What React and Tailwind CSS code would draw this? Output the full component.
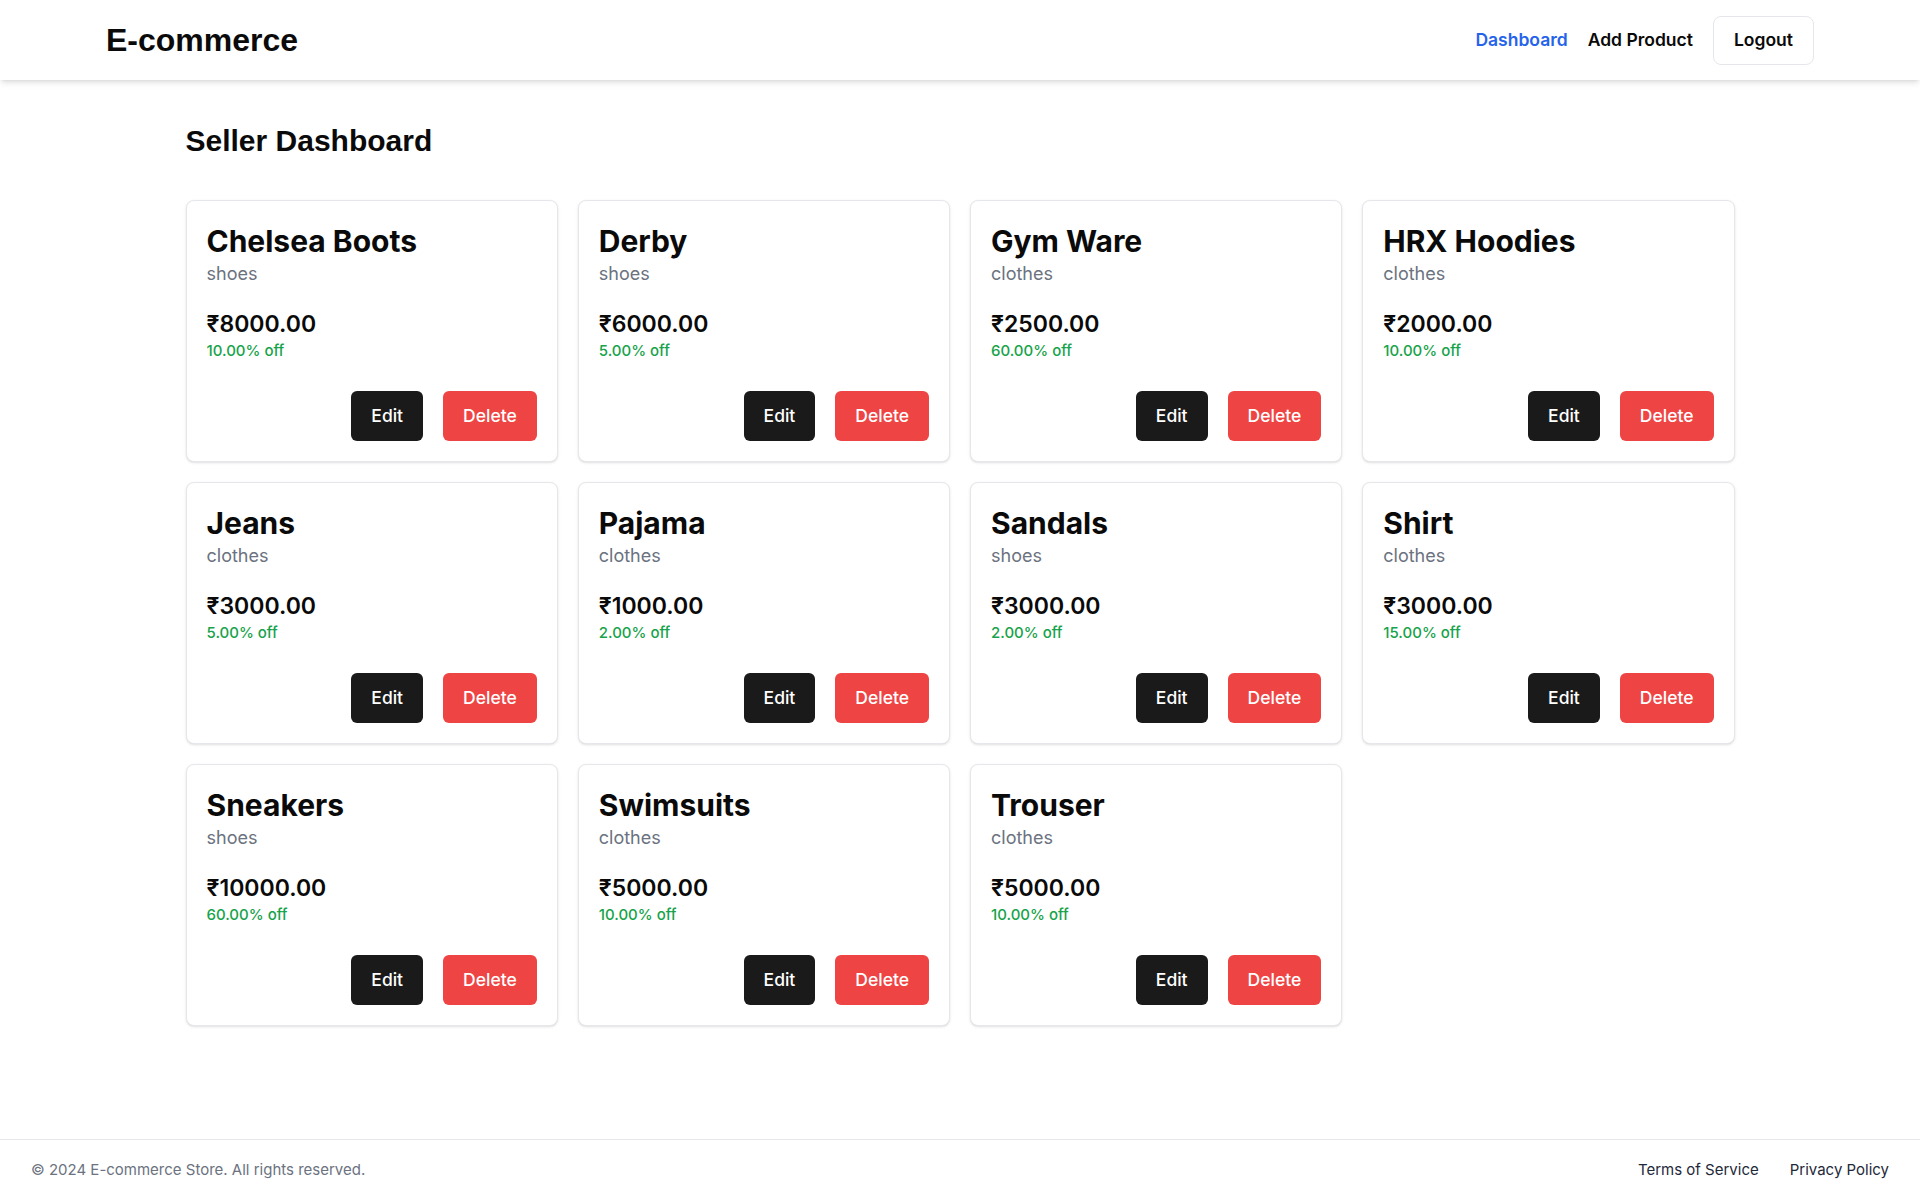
import React from 'react'

const products = [
  { name: 'Chelsea Boots', category: 'shoes', price: '8000.00', discount: '10.00' },
  { name: 'Derby', category: 'shoes', price: '6000.00', discount: '5.00' },
  { name: 'Gym Ware', category: 'clothes', price: '2500.00', discount: '60.00' },
  { name: 'HRX Hoodies', category: 'clothes', price: '2000.00', discount: '10.00' },
  { name: 'Jeans', category: 'clothes', price: '3000.00', discount: '5.00' },
  { name: 'Pajama', category: 'clothes', price: '1000.00', discount: '2.00' },
  { name: 'Sandals', category: 'shoes', price: '3000.00', discount: '2.00' },
  { name: 'Shirt', category: 'clothes', price: '3000.00', discount: '15.00' },
  { name: 'Sneakers', category: 'shoes', price: '10000.00', discount: '60.00' },
  { name: 'Swimsuits', category: 'clothes', price: '5000.00', discount: '10.00' },
  { name: 'Trouser', category: 'clothes', price: '5000.00', discount: '10.00' },
]

function ProductCard({ product }) {
  return (
    <div className="border border-gray-200 rounded-lg shadow-sm bg-white p-5">
      <h2 className="mt-[2px] text-[30px] leading-[36px] font-bold text-neutral-950">{product.name}</h2>
      <p className="mt-px text-lg leading-7 text-[#6b7280]">{product.category}</p>
      <p className="mt-[22px] text-[23px] leading-7 font-semibold text-neutral-950">₹{product.price}</p>
      <p className="mt-[3px] text-[15px] leading-5 font-medium text-[#16a34a]">{product.discount}% off</p>
      <div className="mt-[30px] flex justify-end gap-5">
        <button className="h-[50px] px-5 rounded-md bg-[#1a1a1a] text-white text-[17.5px] font-medium">Edit</button>
        <button className="h-[50px] px-5 rounded-md bg-[#ef4444] text-white text-[17.5px] font-medium">Delete</button>
      </div>
    </div>
  )
}

export default function App() {
  return (
    <div className="min-h-screen flex flex-col bg-white font-['Inter',sans-serif] text-neutral-950">
      {/* Top bar */}
      <header className="h-20 px-[106px] flex items-center justify-between bg-white shadow-md">
        <h1 className="font-['Liberation_Sans',Arial,sans-serif] text-[32px] font-bold">E-commerce</h1>
        <nav className="flex items-center">
          <a className="text-[17.5px] font-semibold text-[#2563eb]">Dashboard</a>
          <a className="ml-5 text-[17.5px] font-semibold">Add Product</a>
          <button className="ml-5 h-[49px] px-5 border border-gray-200 rounded-lg text-[17.5px] font-semibold">Logout</button>
        </nav>
      </header>

      <main className="flex-1">
        <div className="w-[1549px] mx-auto">
          <h2 className="mt-[43px] mb-[41px] font-['Liberation_Sans',Arial,sans-serif] text-[30px] leading-[36px] font-bold">
            Seller Dashboard
          </h2>
          <div className="grid grid-cols-4 gap-5">
            {products.map((p) => (
              <ProductCard key={p.name} product={p} />
            ))}
          </div>
        </div>
      </main>

      <footer className="border-t border-gray-200 px-[31px] py-5 flex justify-between text-[15px] leading-5">
        <p className="text-[#6b7280]">© 2024 E-commerce Store. All rights reserved.</p>
        <div className="flex gap-[31px] text-gray-800">
          <a>Terms of Service</a>
          <a>Privacy Policy</a>
        </div>
      </footer>
    </div>
  )
}
